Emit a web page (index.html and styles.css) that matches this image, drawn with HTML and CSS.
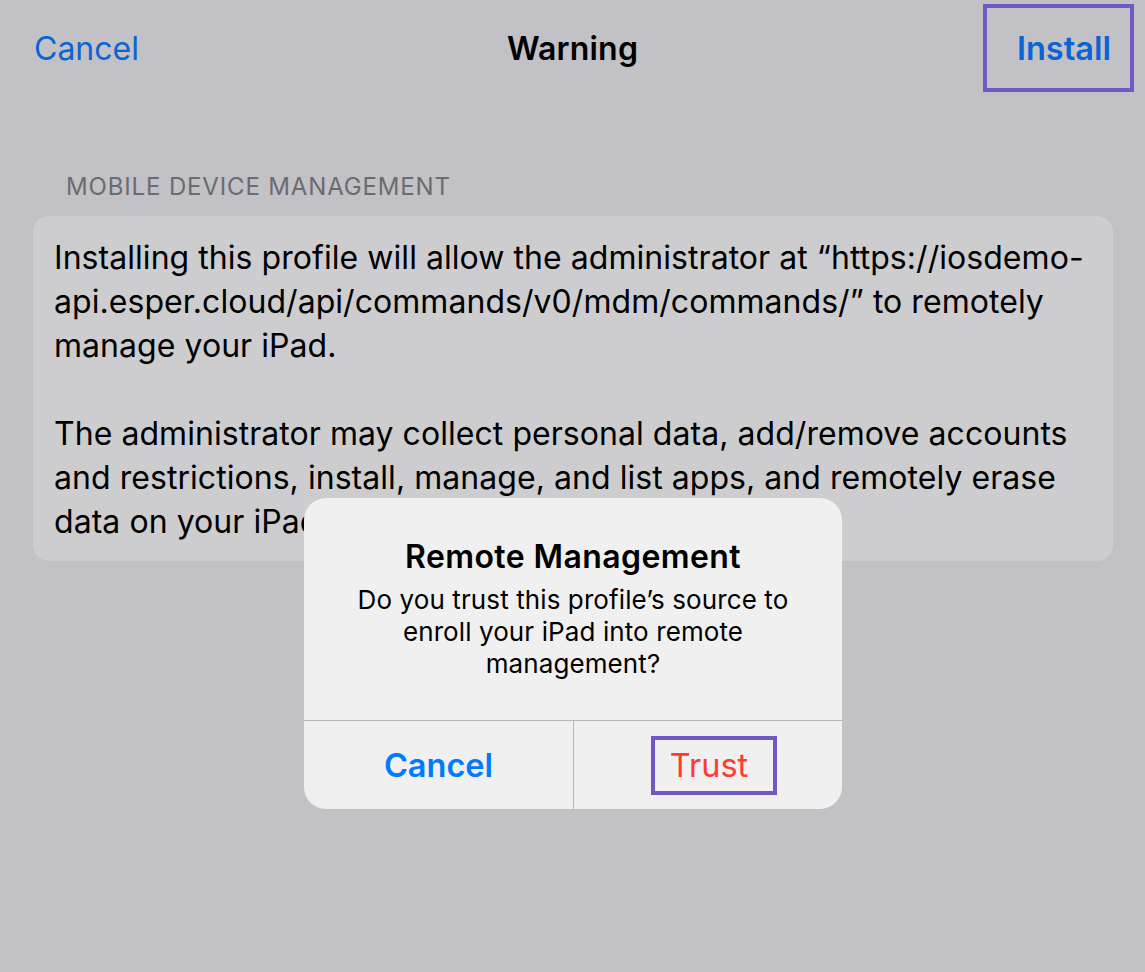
FILE: index.html
```html
<!DOCTYPE html>
<html lang="en">
<head>
    <meta charset="UTF-8">
    <meta name="viewport" content="width=device-width, initial-scale=1.0">
    <title>Warning</title>
    <link rel="stylesheet" href="styles.css">
</head>
<body>
    <div class="screen">
        <header class="nav">
            <a class="nav-btn nav-left">Cancel</a>
            <h1 class="nav-title">Warning</h1>
            <div class="nav-right">
                <a class="nav-btn nav-install highlight">Install</a>
            </div>
        </header>

        <section class="group">
            <h3 class="group-title">Mobile Device Management</h3>
            <div class="card">
                <p>Installing this profile will allow the administrator at “https://iosdemo-api.esper.cloud/api/commands/v0/mdm/commands/” to remotely manage your iPad.</p>
                <p>The administrator may collect personal data, add/remove accounts and restrictions, install, manage, and list apps, and remotely erase data on your iPad.</p>
            </div>
        </section>

        <div class="alert">
            <div class="alert-body">
                <h2 class="alert-title">Remote Management</h2>
                <p class="alert-text">Do you trust this profile’s source to enroll your iPad into remote management?</p>
            </div>
            <div class="alert-actions">
                <button class="alert-btn cancel">Cancel</button>
                <button class="alert-btn trust"><span class="highlight trust-label">Trust</span></button>
            </div>
        </div>
    </div>
</body>
</html>
```

FILE: styles.css
```css
body {
    margin: 0;
    background: #c2c1c6;
    font-family: Inter, "Noto Sans", sans-serif;
    color: #000;
}
.screen {
    position: relative;
    width: 1145px;
    height: 972px;
    overflow: hidden;
}
.nav {
    display: grid;
    grid-template-columns: 1fr auto 1fr;
    align-items: center;
    height: 96px;
    padding: 0 11px;
}
.nav-btn {
    color: #0b64d4;
    font-size: 32px;
}
.nav-left {
    margin-left: 23px;
}
.nav-title {
    margin: 0;
    font-size: 32px;
    font-weight: 600;
    letter-spacing: 0.2px;
}
.nav-right {
    display: flex;
    justify-content: flex-end;
}
.nav-install {
    font-weight: 600;
    font-size: 32.5px;
}
.highlight {
    border: 4px solid #7357c4;
}
.nav-install.highlight {
    display: flex;
    align-items: center;
    height: 80px;
    padding: 0 19px 0 30px;
}
.group {
    padding: 78px 32px 0 33px;
}
.group-title {
    margin: 0 0 16px 33px;
    font-size: 24px;
    line-height: 26px;
    font-weight: 400;
    text-transform: uppercase;
    color: #6b6b70;
    letter-spacing: 0.85px;
}
.card {
    background: #cdcdcf;
    border-radius: 16px;
    padding: 20px 21px 17px;
    font-size: 32px;
    line-height: 44px;
    letter-spacing: 0.05px;
}
.card p {
    margin: 0;
}
.card p + p {
    margin-top: 44px;
}
.alert {
    position: absolute;
    left: 304px;
    top: 498px;
    width: 538px;
    height: 311px;
    background: #f0f0f0;
    border-radius: 22px;
    display: flex;
    flex-direction: column;
    overflow: hidden;
}
.alert-body {
    flex: 1;
    padding: 42px 40px 0;
    text-align: center;
}
.alert-title {
    margin: 0 0 10px;
    font-size: 32px;
    line-height: 34px;
    font-weight: 600;
    letter-spacing: 0.4px;
}
.alert-text {
    margin: 0;
    font-size: 26px;
    line-height: 32px;
    letter-spacing: 0.1px;
}
.alert-actions {
    display: grid;
    grid-template-columns: 1fr 1fr;
    height: 88px;
    border-top: 1px solid #b6b6b8;
}
.alert-btn {
    font-family: inherit;
    font-size: 32.5px;
    background: none;
    border: none;
    padding: 0;
    display: flex;
    align-items: center;
    justify-content: center;
}
.alert-btn + .alert-btn {
    border-left: 1px solid #b6b6b8;
}
.cancel {
    color: #007aff;
    font-weight: 600;
}
.trust {
    color: #ff3b30;
}
.trust-label {
    display: flex;
    align-items: center;
    height: 51px;
    padding: 0 25px 0 15px;
    margin-left: 12px;
}
```
